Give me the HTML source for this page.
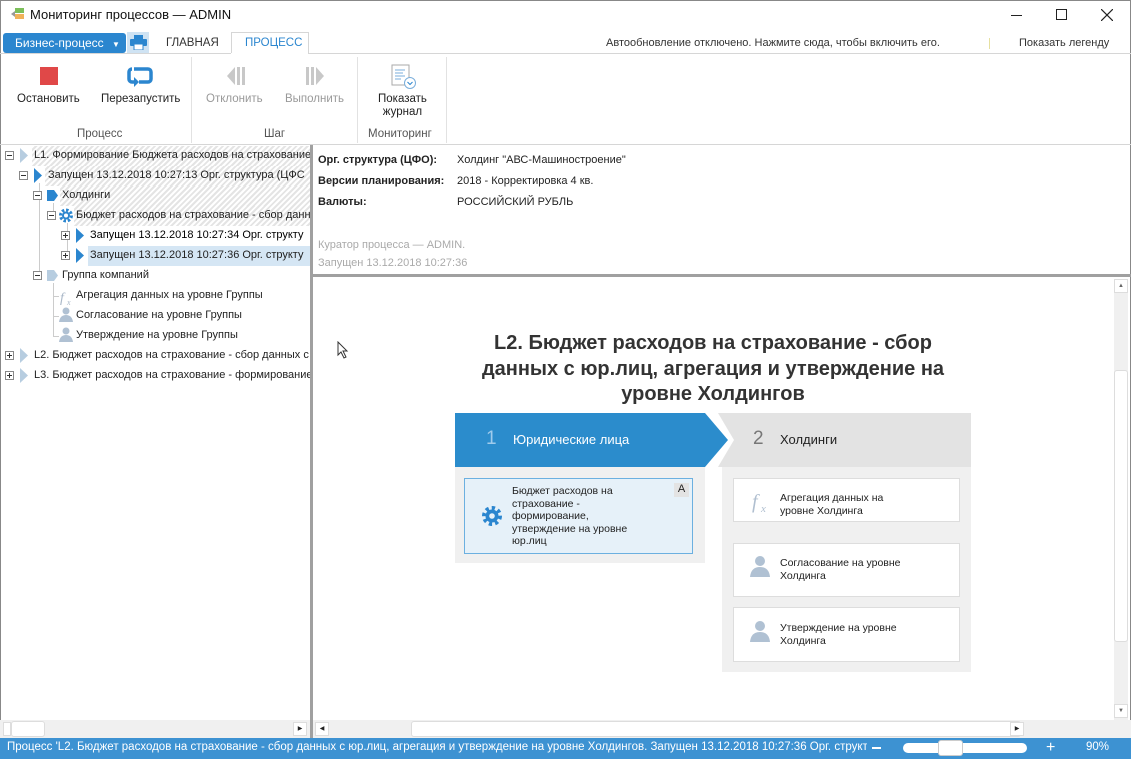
<!DOCTYPE html>
<html><head><meta charset="utf-8">
<style>
*{box-sizing:border-box;margin:0;padding:0}
body{width:1131px;height:759px;overflow:hidden;background:#fff;font-family:"Liberation Sans","DejaVu Sans",sans-serif;font-size:11px;color:#222;position:relative}
.a{position:absolute;white-space:nowrap}
.hatch{background:repeating-linear-gradient(135deg,#fff 0 2px,#e4e4e4 2px 4px)}
.ico{position:absolute}
</style></head><body>
<div class="a" style="left:0;top:0;width:1131px;height:759px;border:1px solid #888;border-bottom:none"></div>
<svg class="ico" style="left:10px;top:8px" width="16" height="14"><rect x="5" y="0" width="9" height="5" fill="#7cbf5a"/><rect x="5" y="6" width="9" height="5" fill="#f0b25a"/><path d="M1 6 L5 3 L5 9Z" fill="#999"/></svg>
<div class="a" style="left:30px;top:7px;font-size:13px;color:#111">Мониторинг процессов — ADMIN</div>
<div class="a" style="left:1011px;top:15px;width:11px;height:1px;background:#222"></div>
<div class="a" style="left:1056px;top:9px;width:11px;height:11px;border:1px solid #222"></div>
<svg class="ico" style="left:1101px;top:9px" width="12" height="12"><path d="M0 0L12 12M12 0L0 12" stroke="#222" stroke-width="1.2"/></svg>
<div class="a" style="left:3px;top:33px;width:123px;height:20px;background:#2b86cf;border-radius:3px;color:#fff;font-size:12px;padding:3px 0 0 12px">Бизнес-процесс <span style="font-size:8px;margin-left:5px">▼</span></div>
<div class="a" style="left:127px;top:32px;width:22px;height:21px;background:#cfe3f3"></div>
<svg class="ico" style="left:130px;top:35px" width="17" height="15"><rect x="4" y="0" width="9" height="4" fill="#2b86cf"/><rect x="0" y="4" width="17" height="7" rx="1" fill="#2b86cf"/><rect x="4" y="9" width="9" height="6" fill="#fff" stroke="#2b86cf"/></svg>
<div class="a" style="left:166px;top:37px;font-size:11.5px;color:#333">ГЛАВНАЯ</div>
<div class="a" style="left:231px;top:32px;width:78px;height:22px;border:1px solid #d6d6d6;border-bottom:none;background:#fff;color:#2b86cf;font-size:11.5px;padding:4px 0 0 13px">ПРОЦЕСС</div>
<div class="a" style="left:0;top:53px;width:1131px;height:1px;background:#d6d6d6"></div>
<div class="a" style="left:231px;top:53px;width:77px;height:1px;background:#fff"></div>
<div class="a" style="left:606px;top:37px;font-size:11px;color:#333">Автообновление отключено. Нажмите сюда, чтобы включить его.</div>
<div class="a" style="left:989px;top:38px;width:1px;height:11px;background:#e6e0a0"></div>
<div class="a" style="left:1019px;top:37px;font-size:11px;color:#333">Показать легенду</div>
<div class="a" style="left:40px;top:67px;width:18px;height:18px;background:#e04848"></div>
<svg class="ico" style="left:126px;top:66px" width="28" height="22"><path d="M8 3 H22 a3 3 0 0 1 3 3 V13 a3 3 0 0 1 -3 3 H13" fill="none" stroke="#2b86cf" stroke-width="3.5"/><path d="M10 16 H6 a3 3 0 0 1 -3 -3 V6 a3 3 0 0 1 3 -3" fill="none" stroke="#2b86cf" stroke-width="3.5"/><path d="M8 11 L13 16 L8 21Z" fill="#2b86cf"/></svg>
<svg class="ico" style="left:226px;top:65px" width="20" height="22"><path d="M9 2 L1 11 L9 20Z" fill="#c8c8c8"/><rect x="11" y="2" width="3" height="18" fill="#c8c8c8"/><rect x="16" y="2" width="3" height="18" fill="#c8c8c8"/></svg>
<svg class="ico" style="left:305px;top:65px" width="20" height="22"><rect x="1" y="2" width="3" height="18" fill="#c8c8c8"/><rect x="6" y="2" width="3" height="18" fill="#c8c8c8"/><path d="M11 2 L19 11 L11 20Z" fill="#c8c8c8"/></svg>
<svg class="ico" style="left:391px;top:64px" width="26" height="26"><rect x="1" y="1" width="17" height="20" fill="#fff" stroke="#aaa"/><path d="M4 6H14M4 9H12M4 12H14M4 15H10" stroke="#7aaedb"/><circle cx="19" cy="19" r="5.5" fill="#fff" stroke="#7aaedb"/><path d="M16.5 18 L19 20.5 L21.5 18" fill="none" stroke="#2b86cf"/></svg>
<div class="a" style="left:17px;top:93px;font-size:11.5px">Остановить</div>
<div class="a" style="left:101px;top:93px;font-size:11.5px">Перезапустить</div>
<div class="a" style="left:206px;top:93px;font-size:11.5px;color:#999">Отклонить</div>
<div class="a" style="left:285px;top:93px;font-size:11.5px;color:#999">Выполнить</div>
<div class="a" style="left:378px;top:93px;font-size:11.5px;text-align:center;line-height:13px">Показать<br>журнал</div>
<div class="a" style="left:77px;top:128px;font-size:11.5px;color:#555">Процесс</div>
<div class="a" style="left:264px;top:128px;font-size:11.5px;color:#555">Шаг</div>
<div class="a" style="left:368px;top:128px;font-size:11.5px;color:#555">Мониторинг</div>
<div class="a" style="left:191px;top:57px;width:1px;height:86px;background:#e2e2e2"></div>
<div class="a" style="left:357px;top:57px;width:1px;height:86px;background:#e2e2e2"></div>
<div class="a" style="left:446px;top:57px;width:1px;height:86px;background:#e2e2e2"></div>
<div class="a" style="left:0;top:144px;width:1131px;height:1px;background:#d6d6d6"></div>
<div class="a hatch" style="left:32px;top:146px;width:278px;height:20px"></div>
<div class="a hatch" style="left:45px;top:166px;width:265px;height:20px"></div>
<div class="a hatch" style="left:60px;top:186px;width:250px;height:20px"></div>
<div class="a hatch" style="left:74px;top:206px;width:236px;height:20px"></div>
<div class="a" style="left:88px;top:246px;width:222px;height:20px;background:#d5e6f4"></div>
<div class="a" style="left:39px;top:183px;width:1px;height:93px;background:#ccc"></div>
<div class="a" style="left:53px;top:203px;width:1px;height:14px;background:#ccc"></div>
<div class="a" style="left:67px;top:223px;width:1px;height:33px;background:#ccc"></div>
<div class="a" style="left:53px;top:283px;width:1px;height:53px;background:#ccc"></div>
<div class="a" style="left:53px;top:296px;width:6px;height:1px;background:#ccc"></div>
<div class="a" style="left:53px;top:316px;width:6px;height:1px;background:#ccc"></div>
<div class="a" style="left:53px;top:336px;width:6px;height:1px;background:#ccc"></div>
<div class="a" style="left:34px;top:149px;font-size:11px">L1. Формирование Бюджета расходов на страхование</div>
<div class="a" style="left:48px;top:169px;font-size:11px">Запущен 13.12.2018 10:27:13 Орг. структура (ЦФС</div>
<div class="a" style="left:62px;top:189px;font-size:11px">Холдинги</div>
<div class="a" style="left:76px;top:209px;font-size:11px">Бюджет расходов на страхование - сбор данн</div>
<div class="a" style="left:90px;top:229px;font-size:11px;color:#000">Запущен 13.12.2018 10:27:34 Орг. структу</div>
<div class="a" style="left:90px;top:249px;font-size:11px">Запущен 13.12.2018 10:27:36 Орг. структу</div>
<div class="a" style="left:62px;top:269px;font-size:11px">Группа компаний</div>
<div class="a" style="left:76px;top:289px;font-size:11px">Агрегация данных на уровне Группы</div>
<div class="a" style="left:76px;top:309px;font-size:11px">Согласование на уровне Группы</div>
<div class="a" style="left:76px;top:329px;font-size:11px">Утверждение на уровне Группы</div>
<div class="a" style="left:34px;top:349px;font-size:11px">L2. Бюджет расходов на страхование - сбор данных с</div>
<div class="a" style="left:34px;top:369px;font-size:11px">L3. Бюджет расходов на страхование - формирование</div>
<svg class="ico" style="left:0;top:145px" width="90" height="240">
<g fill="#fff" stroke="#888">
<rect x="5.5" y="6.5" width="8" height="8"/><rect x="19.5" y="26.5" width="8" height="8"/><rect x="33.5" y="46.5" width="8" height="8"/><rect x="47.5" y="66.5" width="8" height="8"/><rect x="61.5" y="86.5" width="8" height="8"/><rect x="61.5" y="106.5" width="8" height="8"/><rect x="33.5" y="126.5" width="8" height="8"/><rect x="5.5" y="206.5" width="8" height="8"/><rect x="5.5" y="226.5" width="8" height="8"/></g>
<g stroke="#333"><path d="M7 10.5H12M21 30.5H26M35 50.5H40M49 70.5H54M63 90.5H68M65.5 88V93M63 110.5H68M65.5 108V113M35 130.5H40M7 210.5H12M9.5 208V213M7 230.5H12M9.5 228V233"/></g>
<path d="M20 3 L28 10.5 L20 18Z" fill="#b7cde0"/>
<path d="M34 23 L42 30.5 L34 38Z" fill="#2b86cf"/>
<path d="M47 45 H54 L58 50.5 L54 56 H47Z" fill="#2b86cf"/>
<path d="M76 83 L84 90.5 L76 98Z" fill="#2b86cf"/>
<path d="M76 103 L84 110.5 L76 118Z" fill="#2b86cf"/>
<path d="M47 125 H54 L58 130.5 L54 136 H47Z" fill="#b7cde0"/>
<path d="M20 203 L28 210.5 L20 218Z" fill="#b7cde0"/>
<path d="M20 223 L28 230.5 L20 238Z" fill="#b7cde0"/>
<circle cx="66" cy="70.5" r="5.5" fill="none" stroke="#2b86cf" stroke-width="3" stroke-dasharray="2.5 1.8"/><circle cx="66" cy="70.5" r="4" fill="#2b86cf"/><circle cx="66" cy="70.5" r="2" fill="#fff"/>
<text x="60" y="157" font-family="Liberation Serif" font-style="italic" font-size="14" fill="#aab8c8">f</text><text x="67" y="160" font-family="Liberation Serif" font-style="italic" font-size="8" fill="#aab8c8">x</text>
<circle cx="66" cy="166" r="3.5" fill="#b0c1d3"/><path d="M59 177 Q60 170 66 170 Q72 170 73 177Z" fill="#b0c1d3"/>
<circle cx="66" cy="186" r="3.5" fill="#b0c1d3"/><path d="M59 197 Q60 190 66 190 Q72 190 73 197Z" fill="#b0c1d3"/>
</svg>
<svg class="ico" style="left:337px;top:341px" width="12" height="18"><path d="M1 1 L1 14 L4 11 L7 17 L9 16 L6 10 L10 10Z" fill="#fff" stroke="#333"/></svg>
<div class="a" style="left:310px;top:145px;width:3px;height:593px;background:#a0a0a0"></div>
<div class="a" style="left:313px;top:274px;width:818px;height:3px;background:#a0a0a0"></div>
<div class="a" style="left:318px;top:154px;font-weight:bold;font-size:11px">Орг. структура (ЦФО):</div>
<div class="a" style="left:457px;top:154px;font-size:11px">Холдинг "АВС-Машиностроение"</div>
<div class="a" style="left:318px;top:175px;font-weight:bold;font-size:11px">Версии планирования:</div>
<div class="a" style="left:457px;top:175px;font-size:11px">2018 - Корректировка 4 кв.</div>
<div class="a" style="left:318px;top:196px;font-weight:bold;font-size:11px">Валюты:</div>
<div class="a" style="left:457px;top:196px;font-size:11px">РОССИЙСКИЙ РУБЛЬ</div>
<div class="a" style="left:318px;top:239px;font-size:11px;color:#aaa">Куратор процесса — ADMIN.</div>
<div class="a" style="left:318px;top:257px;font-size:11px;color:#aaa">Запущен 13.12.2018 10:27:36</div>
<div class="a" style="left:413px;top:331px;width:600px;text-align:center;font-weight:bold;font-size:20px;line-height:25.5px;color:#333">L2. Бюджет расходов на страхование - сбор<br>данных с юр.лиц, агрегация и утверждение на<br>уровне Холдингов</div>
<div class="a" style="left:722px;top:413px;width:249px;height:259px;background:#f0f0f0"></div>
<div class="a" style="left:455px;top:467px;width:250px;height:96px;background:#f0f0f0"></div>
<svg class="ico" style="left:455px;top:413px" width="520" height="54"><rect x="263" y="0" width="253" height="54" fill="#e3e3e3"/><path d="M263 0 L279 27 L263 54Z" fill="#fff"/><path d="M0 0 H250 L273 27 L250 54 H0Z" fill="#2b8ccc"/></svg>
<div class="a" style="left:486px;top:428px;font-size:19px;color:#9fcbec">1</div>
<div class="a" style="left:513px;top:432px;font-size:13px;color:#fff">Юридические лица</div>
<div class="a" style="left:753px;top:428px;font-size:19px;color:#777">2</div>
<div class="a" style="left:780px;top:432px;font-size:13px;color:#222">Холдинги</div>
<div class="a" style="left:464px;top:478px;width:229px;height:76px;background:#e6f1f9;border:1px solid #6cb0e0"></div>
<div class="a" style="left:674px;top:483px;width:15px;height:14px;background:#e3e3e3;font-size:11px;text-align:center">A</div>
<div class="a" style="left:512px;top:485px;font-size:10.5px;line-height:12.5px">Бюджет расходов на<br>страхование -<br>формирование,<br>утверждение на уровне<br>юр.лиц</div>
<svg class="ico" style="left:481px;top:505px" width="22" height="22"><circle cx="11" cy="11" r="8" fill="none" stroke="#2b86cf" stroke-width="4" stroke-dasharray="3.2 3"/><circle cx="11" cy="11" r="6.5" fill="#2b86cf"/><circle cx="11" cy="11" r="2.8" fill="#e6f1f9"/></svg>
<div class="a" style="left:733px;top:478px;width:227px;height:44px;background:#fff;border:1px solid #ddd"></div>
<div class="a" style="left:733px;top:543px;width:227px;height:54px;background:#fff;border:1px solid #ddd"></div>
<div class="a" style="left:733px;top:607px;width:227px;height:55px;background:#fff;border:1px solid #ddd"></div>
<div class="a" style="left:780px;top:492px;font-size:10.5px;line-height:12.5px">Агрегация данных на<br>уровне Холдинга</div>
<div class="a" style="left:780px;top:557px;font-size:10.5px;line-height:12.5px">Согласование на уровне<br>Холдинга</div>
<div class="a" style="left:780px;top:622px;font-size:10.5px;line-height:12.5px">Утверждение на уровне<br>Холдинга</div>
<svg class="ico" style="left:748px;top:490px" width="24" height="160">
<text x="4" y="18" font-family="Liberation Serif" font-style="italic" font-size="20" fill="#b0bfd0">f</text><text x="13" y="22" font-family="Liberation Serif" font-style="italic" font-size="11" fill="#b0bfd0">x</text>
<circle cx="12" cy="71" r="5" fill="#b0c1d3"/><path d="M2 87 Q3 77 12 77 Q21 77 22 87Z" fill="#b0c1d3"/>
<circle cx="12" cy="136" r="5" fill="#b0c1d3"/><path d="M2 152 Q3 142 12 142 Q21 142 22 152Z" fill="#b0c1d3"/>
</svg>
<div class="a" style="left:1114px;top:279px;width:14px;height:441px;background:#f0f0f0"></div>
<div class="a" style="left:1114px;top:279px;width:14px;height:14px;background:#fff;border:1px solid #ddd;font-size:6px;text-align:center;line-height:12px;color:#666">▲</div>
<div class="a" style="left:1114px;top:370px;width:14px;height:272px;background:#fff;border:1px solid #ddd;border-radius:3px"></div>
<div class="a" style="left:1114px;top:704px;width:14px;height:14px;background:#fff;border:1px solid #ddd;font-size:6px;text-align:center;line-height:12px;color:#666">▼</div>
<div class="a" style="left:0;top:720px;width:310px;height:18px;background:#f0f0f0"></div>
<div class="a" style="left:3px;top:722px;width:8px;height:14px;background:#fff;border:1px solid #ddd"></div>
<div class="a" style="left:11px;top:721px;width:34px;height:16px;background:#fff;border:1px solid #ddd;border-radius:3px"></div>
<div class="a" style="left:293px;top:722px;width:14px;height:14px;background:#fff;border:1px solid #ddd;font-size:6px;text-align:center;line-height:12px">▶</div>
<div class="a" style="left:313px;top:720px;width:818px;height:18px;background:#f0f0f0"></div>
<div class="a" style="left:315px;top:722px;width:14px;height:14px;background:#fff;border:1px solid #ddd;font-size:6px;text-align:center;line-height:12px">◀</div>
<div class="a" style="left:411px;top:721px;width:610px;height:16px;background:#fff;border:1px solid #ddd;border-radius:3px"></div>
<div class="a" style="left:1010px;top:722px;width:14px;height:14px;background:#fff;border:1px solid #ddd;font-size:6px;text-align:center;line-height:12px">▶</div>
<div class="a" style="left:0;top:738px;width:1131px;height:21px;background:#3d92d2"></div>
<div class="a" style="left:7px;top:741px;width:860px;overflow:hidden;color:#fff;font-size:11.5px">Процесс 'L2. Бюджет расходов на страхование - сбор данных с юр.лиц, агрегация и утверждение на уровне Холдингов. Запущен 13.12.2018 10:27:36 Орг. структура</div>
<div class="a" style="left:872px;top:747px;width:9px;height:1.5px;background:#fff"></div>
<div class="a" style="left:903px;top:743px;width:124px;height:10px;background:#fff;border-radius:5px"></div>
<div class="a" style="left:938px;top:740px;width:25px;height:16px;background:#fff;border-radius:3px;border:1px solid #ccc"></div>
<div class="a" style="left:1046px;top:739px;color:#fff;font-size:16px">+</div>
<div class="a" style="left:1086px;top:741px;color:#fff;font-size:11.5px">90%</div>
</body></html>
